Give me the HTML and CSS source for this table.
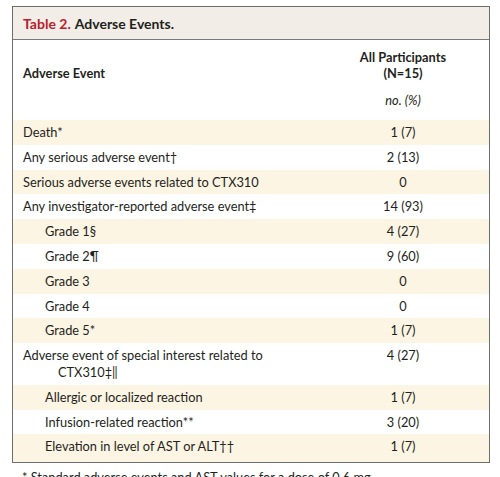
FILE: index.html
```html
<!DOCTYPE html>
<html lang="en">
<head>
    <meta charset="UTF-8">
    <meta name="viewport" content="width=device-width, initial-scale=1.0">
    <title>Table 2. Adverse Events</title>
    <link rel="stylesheet" href="styles.css">
</head>
<body>
    <div class="table-frame">
        <div class="table-caption">
            <span class="table-number">Table 2.</span> Adverse Events.
        </div>

        <table class="events-table">
            <thead>
                <tr>
                    <th class="col-event">Adverse Event</th>
                    <th class="col-value">All Participants<br>(N=15)</th>
                </tr>
                <tr class="unit-row">
                    <th></th>
                    <th class="col-value"><em>no. (%)</em></th>
                </tr>
            </thead>
            <tbody>
                <tr class="shaded">
                    <td>Death*</td>
                    <td class="col-value">1 (7)</td>
                </tr>
                <tr>
                    <td>Any serious adverse event†</td>
                    <td class="col-value">2 (13)</td>
                </tr>
                <tr class="shaded">
                    <td>Serious adverse events related to CTX310</td>
                    <td class="col-value">0</td>
                </tr>
                <tr>
                    <td>Any investigator-reported adverse event‡</td>
                    <td class="col-value">14 (93)</td>
                </tr>
                <tr class="shaded">
                    <td class="indent">Grade 1§</td>
                    <td class="col-value">4 (27)</td>
                </tr>
                <tr>
                    <td class="indent">Grade 2¶</td>
                    <td class="col-value">9 (60)</td>
                </tr>
                <tr class="shaded">
                    <td class="indent">Grade 3</td>
                    <td class="col-value">0</td>
                </tr>
                <tr>
                    <td class="indent">Grade 4</td>
                    <td class="col-value">0</td>
                </tr>
                <tr class="shaded">
                    <td class="indent">Grade 5*</td>
                    <td class="col-value">1 (7)</td>
                </tr>
                <tr>
                    <td class="hanging">Adverse event of special interest related to CTX310‡‖</td>
                    <td class="col-value top">4 (27)</td>
                </tr>
                <tr class="shaded">
                    <td class="indent">Allergic or localized reaction</td>
                    <td class="col-value">1 (7)</td>
                </tr>
                <tr>
                    <td class="indent">Infusion-related reaction**</td>
                    <td class="col-value">3 (20)</td>
                </tr>
                <tr class="shaded last">
                    <td class="indent">Elevation in level of AST or ALT††</td>
                    <td class="col-value">1 (7)</td>
                </tr>
            </tbody>
        </table>
    </div>

    <p class="footnote">* Standard adverse events and AST values for a dose of 0.6 mg.</p>
</body>
</html>
```

FILE: styles.css
```css
* {
    margin: 0;
    padding: 0;
    box-sizing: border-box;
}

html {
    overflow: hidden;
}

body {
    background: #fff;
    font-family: Lato, "Open Sans", sans-serif;
    font-size: 12.8px;
    color: #231f20;
}

.table-frame {
    margin: 6px 10px 0 12px;
    border: 1.5px solid #6d6d6d;
}

.table-caption {
    height: 33px;
    padding: 0 0 0 10px;
    display: flex;
    align-items: center;
    background: #f2ede6;
    border-bottom: 1px solid #7a7a7a;
    font-size: 14px;
    font-weight: 700;
}

.table-number {
    color: #b8202e;
    margin-right: 4px;
}

.events-table {
    width: 100%;
    border-collapse: collapse;
}

.events-table th {
    font-weight: 700;
    text-align: left;
    vertical-align: bottom;
    padding: 9px 0 3px 10px;
    line-height: 16px;
}

.events-table .unit-row th {
    padding: 8px 0 12px;
    font-weight: 400;
}

.events-table td {
    padding: 4px 0 4px 10px;
    line-height: 16.8px;
}

.col-event {
    width: 304px;
}

.events-table .col-value {
    text-align: center;
    padding-left: 0;
    padding-right: 0;
}

.events-table .top {
    vertical-align: top;
}

.events-table td.indent {
    padding-left: 32px;
}

.events-table td.hanging {
    padding-left: 45px;
    text-indent: -35px;
}

.shaded {
    background: #fdf5e4;
}

.last td {
    padding-bottom: 7px;
}

.footnote {
    margin: 6px 0 0 22px;
    font-size: 12.8px;
    white-space: nowrap;
}
```
